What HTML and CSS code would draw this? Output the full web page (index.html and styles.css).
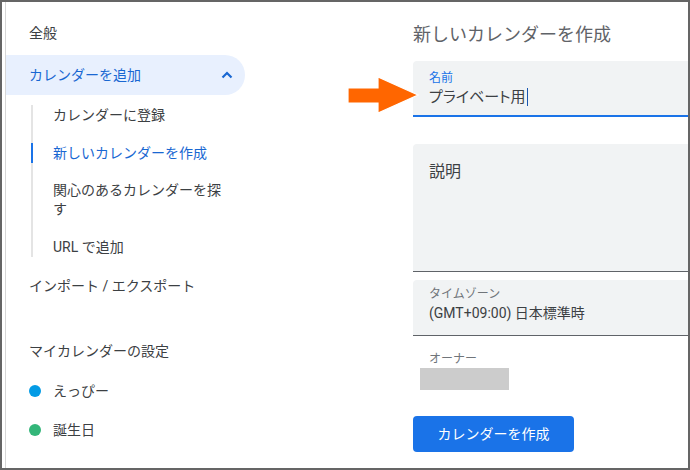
FILE: index.html
```html
<!DOCTYPE html>
<html lang="ja">
<head>
<meta charset="utf-8">
<title>新しいカレンダーを作成</title>
<link rel="stylesheet" href="styles.css">
</head>
<body>
<div class="frame">
  <nav class="sidebar">
    <div class="nav-item general">全般</div>
    <div class="nav-item selected">
      <span>カレンダーを追加</span>
      <svg class="chevron" width="12" height="8" viewBox="0 0 12 8"><path d="M1.5 6.5 L6 2 L10.5 6.5" fill="none" stroke="#1967d2" stroke-width="2.2"/></svg>
    </div>
    <ul class="sub-list">
      <li>カレンダーに登録</li>
      <li class="active">新しいカレンダーを作成</li>
      <li class="wrap">関心のあるカレンダーを探す</li>
      <li>URL で追加</li>
    </ul>
    <div class="nav-item import">インポート / エクスポート</div>
    <div class="section-title">マイカレンダーの設定</div>
    <div class="cal-item first"><span class="dot blue"></span>えっぴー</div>
    <div class="cal-item"><span class="dot green"></span>誕生日</div>
  </nav>
  <main class="content">
    <h1 class="title">新しいカレンダーを作成</h1>
    <div class="field name-field">
      <div class="label label-blue">名前</div>
      <div class="value value-name">プライベート用<span class="caret"></span></div>
    </div>
    <div class="field desc-field">
      <div class="placeholder">説明</div>
    </div>
    <div class="field tz-field">
      <div class="label">タイムゾーン</div>
      <div class="value">(GMT+09:00) 日本標準時</div>
    </div>
    <div class="owner">
      <div class="label owner-label">オーナー</div>
      <div class="owner-box"></div>
    </div>
    <button class="create-btn">カレンダーを作成</button>
  </main>
  <svg class="arrow" width="74" height="39" viewBox="0 0 74 39"><polygon points="1,12 31,12 31,1 71,19 31,37 31,27 1,27" fill="#ff6600" stroke="#ffffff" stroke-width="1.2" stroke-linejoin="miter"/></svg>
</div>
</body>
</html>
```
FILE: styles.css
```css
* { box-sizing: border-box; }
html, body { margin: 0; padding: 0; background: #ffffff; }
body {
  font-family: Roboto, "Noto Sans CJK JP", sans-serif;
  color: #3c4043;
  font-size: 14px;
}
.frame {
  position: relative;
  width: 690px;
  height: 470px;
  border: 2px solid #656565;
  display: flex;
  overflow: hidden;
  background: #ffffff;
}
.sidebar {
  width: 240px;
  margin-left: 3px;
  border-left: 1px solid #d6d6d6;
  padding-top: 21px;
  flex-shrink: 0;
}
.nav-item {
  padding-left: 23px;
  line-height: 20px;
}
.selected {
  margin-top: 12px;
  height: 40px;
  line-height: 40px;
  background: #e8f0fe;
  color: #1967d2;
  border-radius: 0 20px 20px 0;
  display: flex;
  align-items: center;
  justify-content: space-between;
  padding-right: 12px;
}
.chevron { display: block; margin-top: -1px; }
.sub-list {
  list-style: none;
  margin: 10px 0 0 25px;
  padding: 0;
  border-left: 2px solid #e4e4e4;
  display: flex;
  flex-direction: column;
  gap: 18px;
}
.sub-list li {
  margin-left: -2px;
  border-left: 2px solid transparent;
  padding-left: 20px;
  line-height: 20px;
  width: 200px;
}
.sub-list li.wrap { line-height: 19px; }
.sub-list li.active {
  border-left-color: #1a73e8;
  color: #1967d2;
}
.import { margin-top: 19px; }
.section-title {
  margin-top: 45px;
  padding-left: 23px;
  line-height: 20px;
}
.cal-item {
  margin-top: 19px;
  padding-left: 23px;
  line-height: 20px;
  display: flex;
  align-items: center;
  gap: 12px;
}
.cal-item.first { margin-top: 20px; }
.dot {
  width: 12px;
  height: 12px;
  border-radius: 50%;
  display: inline-block;
}
.dot.blue { background: #039be5; }
.dot.green { background: #33b679; }

.content {
  margin-left: 168px;
  flex: 1;
  padding-top: 21px;
  min-width: 0;
}
.title {
  margin: 0;
  font-size: 18px;
  font-weight: 400;
  line-height: 24px;
  color: #5f6368;
}
.field {
  width: calc(100% + 20px);
  background: #f1f3f4;
  border-radius: 4px 4px 0 0;
  padding-left: 16px;
}
.name-field {
  margin-top: 14px;
  height: 56px;
  padding-top: 9px;
  border-bottom: 2px solid #1a73e8;
}
.label {
  font-size: 12px;
  line-height: 16px;
  color: #70757a;
}
.label-blue { color: #1a73e8; }
.value {
  font-size: 14px;
  line-height: 20px;
  color: #3c4043;
}
.value-name {
  margin-top: 1px;
  font-size: 15px;
  font-feature-settings: "palt";
  color: #3c4043;
}
.caret {
  display: inline-block;
  width: 1px;
  height: 18px;
  background: #1a57b0;
  vertical-align: -4px;
  margin-left: 1px;
}
.desc-field {
  margin-top: 27px;
  height: 128px;
  padding-top: 16px;
  border-bottom: 1px solid #5f6368;
}
.placeholder {
  font-size: 16px;
  line-height: 24px;
  color: #3c4043;
}
.tz-field {
  margin-top: 8px;
  height: 56px;
  padding-top: 6px;
  border-bottom: 1px solid #5f6368;
}
.tz-field .value { margin-top: 1px; }
.owner { margin-top: 15px; }
.owner-label { padding-left: 16px; }
.owner-box {
  margin-left: 7px;
  width: 89px;
  height: 22px;
  background: #cccccc;
  margin-top: 1px;
}
.create-btn {
  margin-top: 26px;
  height: 36px;
  padding: 0 24px;
  border: none;
  border-radius: 4px;
  background: #1a73e8;
  color: #ffffff;
  font-family: Roboto, "Noto Sans CJK JP", sans-serif;
  font-size: 14px;
  line-height: 36px;
  width: 161px;
}
.arrow {
  position: absolute;
  left: 345px;
  top: 74px;
}
```
